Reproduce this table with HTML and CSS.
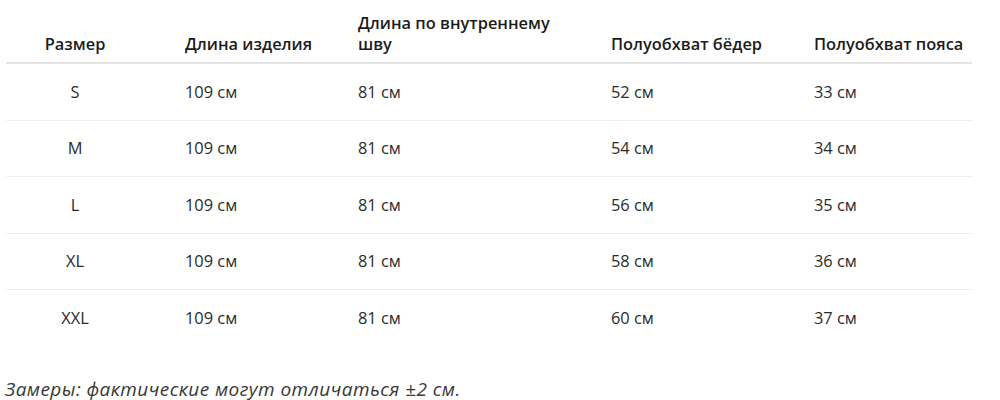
FILE: index.html
```html
<!DOCTYPE html>
<html lang="ru">
<head>
<meta charset="utf-8">
<title>Таблица размеров</title>
<link rel="stylesheet" href="styles.css">
</head>
<body>
<div class="page">
  <table class="sizes">
    <colgroup>
      <col class="c1"><col class="c2"><col class="c3"><col class="c4"><col class="c5">
    </colgroup>
    <thead>
      <tr>
        <th class="size">Размер</th>
        <th>Длина изделия</th>
        <th><span class="wrap">Длина по внутреннему шву</span></th>
        <th>Полуобхват бёдер</th>
        <th>Полуобхват пояса</th>
      </tr>
    </thead>
    <tbody>
      <tr><td class="size">S</td><td>109 см</td><td>81 см</td><td>52 см</td><td>33 см</td></tr>
      <tr><td class="size">M</td><td>109 см</td><td>81 см</td><td>54 см</td><td>34 см</td></tr>
      <tr><td class="size">L</td><td>109 см</td><td>81 см</td><td>56 см</td><td>35 см</td></tr>
      <tr><td class="size">XL</td><td>109 см</td><td>81 см</td><td>58 см</td><td>36 см</td></tr>
      <tr><td class="size">XXL</td><td>109 см</td><td>81 см</td><td>60 см</td><td>37 см</td></tr>
    </tbody>
  </table>
  <p class="note">Замеры: фактические могут отличаться ±2 см.</p>
</div>
</body>
</html>
```
FILE: styles.css
```css
html, body {
  margin: 0;
  padding: 0;
  background: #ffffff;
}
body {
  font-family: "Open Sans", "Noto Sans", "Liberation Sans", sans-serif;
  color: #2b2b2b;
}
.page {
  padding: 0 28px 0 6px;
}
.sizes {
  width: 966px;
  table-layout: fixed;
  border-collapse: separate;
  border-spacing: 0;
  font-size: 16.4px;
}
.c1 { width: 167px; }
.c2 { width: 173px; }
.c3 { width: 253px; }
.c4 { width: 203px; }
.c5 { width: 170px; }
.sizes th {
  font-weight: 600;
  color: #1c1c1c;
  text-align: left;
  vertical-align: bottom;
  line-height: 21px;
  padding: 12px 0 8px 12px;
  border-bottom: 2px solid #e4e4e4;
}
.sizes th.size,
.sizes td.size {
  text-align: center;
  padding-left: 0;
  padding-right: 29px;
}
.wrap {
  display: block;
  max-width: 215px;
}
.sizes td {
  line-height: 20px;
  padding: 17.75px 0 17.75px 12px;
  vertical-align: middle;
  border-bottom: 1px solid #f0f0f0;
}
.sizes tbody tr:last-child td {
  border-bottom: none;
}
.note {
  margin: 31px 0 0 -1px;
  font-size: 19px;
  letter-spacing: 0.45px;
  font-style: italic;
  line-height: 24px;
  color: #383838;
}
```
